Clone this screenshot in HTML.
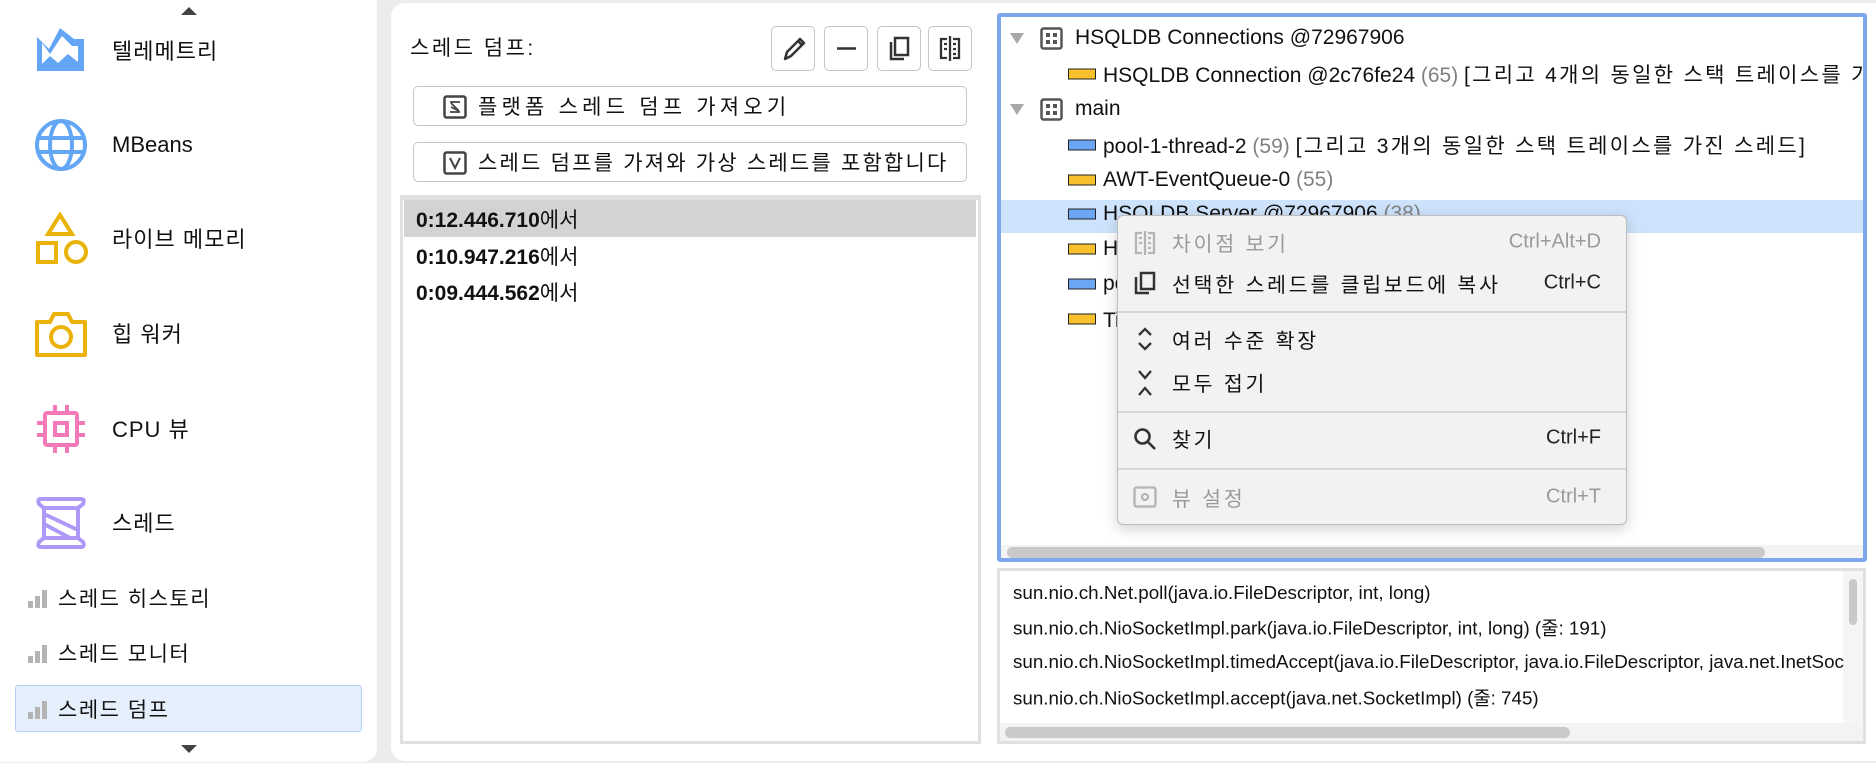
<!DOCTYPE html>
<html><head><meta charset="utf-8"><style>
*{margin:0;padding:0;box-sizing:border-box}
body{width:1876px;height:763px;background:#ececec;position:relative;overflow:hidden;font-family:"Liberation Sans","Noto Sans CJK KR",sans-serif;color:#111}
.a{position:absolute;white-space:nowrap}
.side{left:0;top:0;width:377px;height:762px;background:#fff;border-radius:0 0 14px 0}
.main{left:391px;top:3px;width:1485px;height:758px;background:#fff;border-radius:14px 0 0 14px}
.sl{font-size:22px;left:112px;transform:translateY(-50%);letter-spacing:1px}
.ss{font-size:21px;left:58px;transform:translateY(-50%);letter-spacing:1.5px}
.btn{border:1px solid #c4c4c4;border-radius:5px;background:#fff}
.tb{width:44px;height:45px;top:26px}
.tr{font-size:21px;transform:translateY(-50%)}
.k{letter-spacing:2.3px}
.g{color:#808080}
.bar{width:28px;height:11px;border:1.5px solid #222;transform:translateY(-50%)}
.y{background:#f8c02c}.b{background:#6aa6f4}
.mi{font-size:20.5px;left:1172px;transform:translateY(-50%);letter-spacing:2.8px}
.sc{font-size:20px;right:275px;transform:translateY(-50%);color:#222}
.dis{color:#9a9a9a}
.sep{left:1118px;width:508px;height:2px;background:#d6d6d6}
.st{font-size:18.8px;left:1013px;transform:translateY(-50%)}
</style></head><body>
<div class="a side"></div>
<div class="a main"></div>
<!-- sidebar -->
<div class="a" style="left:181px;top:7px;width:0;height:0;border-left:8px solid transparent;border-right:8px solid transparent;border-bottom:8px solid #444"></div>
<div class="a" style="left:181px;top:745px;width:0;height:0;border-left:8px solid transparent;border-right:8px solid transparent;border-top:8px solid #444"></div>
<svg class="a" style="left:36px;top:26px" width="50" height="47" viewBox="0 0 50 47"><path d="M1 11 L13 23 L24 2 L38 13 L48 13 L48 45 L1 45Z" fill="#64a6f6"/><path d="M6 17 L14 28 L26 10 L36 20 L42 20 L42 36 L32 28 L22 37 L14 30 L6 38Z" fill="#fff"/></svg>
<div class="a sl" style="top:50px">텔레메트리</div>
<svg class="a" style="left:34px;top:118px" width="54" height="54" viewBox="0 0 54 54" fill="none" stroke="#64a6f6" stroke-width="4"><circle cx="27" cy="27" r="24"/><ellipse cx="27" cy="27" rx="11" ry="24"/><path d="M3 20H51M3 34H51"/></svg>
<div class="a sl" style="top:145px;letter-spacing:0">MBeans</div>
<svg class="a" style="left:36px;top:212px" width="52" height="54" viewBox="0 0 52 54" fill="none" stroke="#ebb30a" stroke-width="4"><path d="M24 3 L36 22 L12 22Z"/><rect x="2" y="31" width="18" height="19"/><circle cx="40" cy="40" r="10"/></svg>
<div class="a sl" style="top:238px">라이브 메모리</div>
<svg class="a" style="left:34px;top:310px" width="54" height="48" viewBox="0 0 54 48" fill="none" stroke="#ebb30a" stroke-width="4"><path d="M3 12 H16 L20 4 H34 L38 12 H51 V45 H3Z" stroke-linejoin="round"/><circle cx="27" cy="27" r="10"/></svg>
<div class="a sl" style="top:333px">힙 워커</div>
<svg class="a" style="left:36px;top:404px" width="50" height="50" viewBox="0 0 50 50" fill="none" stroke="#f37ab9" stroke-width="4"><rect x="9" y="9" width="32" height="32" rx="2"/><rect x="19" y="19" width="12" height="12"/><path d="M19 1V9M31 1V9M19 41V49M31 41V49M1 19H9M1 31H9M41 19H49M41 31H49"/></svg>
<div class="a sl" style="top:428px">CPU 뷰</div>
<svg class="a" style="left:36px;top:496px" width="50" height="54" viewBox="0 0 50 54" fill="none" stroke="#ae98f8" stroke-width="4"><path d="M5 3H45Q49 3 47 8L42 12V42L47 46Q49 51 45 51H5Q1 51 3 46L8 42V12L3 8Q1 3 5 3Z"/><path d="M8 12H42M8 42H42M8 18L42 34M8 28L34 42"/></svg>
<div class="a sl" style="top:522px">스레드</div>
<div class="a" style="left:15px;top:685px;width:347px;height:47px;background:#e6f0fd;border:1px solid #b5d1f3;border-radius:3px"></div>
<svg class="a" style="left:28px;top:590px" width="20" height="18"><rect x="0" y="11" width="5" height="7" fill="#b3b3b3"/><rect x="7" y="6" width="5" height="12" fill="#b3b3b3"/><rect x="14" y="0" width="5" height="18" fill="#b3b3b3"/></svg>
<div class="a ss" style="top:598px">스레드 히스토리</div>
<svg class="a" style="left:28px;top:645px" width="20" height="18"><rect x="0" y="11" width="5" height="7" fill="#b3b3b3"/><rect x="7" y="6" width="5" height="12" fill="#b3b3b3"/><rect x="14" y="0" width="5" height="18" fill="#b3b3b3"/></svg>
<div class="a ss" style="top:653px">스레드 모니터</div>
<svg class="a" style="left:28px;top:701px" width="20" height="18"><rect x="0" y="11" width="5" height="7" fill="#b3b3b3"/><rect x="7" y="6" width="5" height="12" fill="#b3b3b3"/><rect x="14" y="0" width="5" height="18" fill="#b3b3b3"/></svg>
<div class="a ss" style="top:709px">스레드 덤프</div>
<!-- middle -->
<div class="a" style="left:410px;top:47px;font-size:21px;letter-spacing:2.5px;transform:translateY(-50%)">스레드 덤프:</div>
<div class="a btn tb" style="left:771px"><svg width="42" height="43" viewBox="0 0 42 43"><path d="M13 32 L15 25 L28 12 L32 16 L19 29 Z M26 14 L30 18" fill="none" stroke="#333" stroke-width="2.5" stroke-linejoin="round"/></svg></div>
<div class="a btn tb" style="left:824px"><svg width="42" height="43"><path d="M12 21.5H31" stroke="#333" stroke-width="2.5"/></svg></div>
<div class="a btn tb" style="left:877px"><svg width="42" height="43" viewBox="0 0 42 43"><rect x="17" y="11" width="13" height="17" fill="none" stroke="#333" stroke-width="2.5"/><path d="M13 15V32H26" fill="none" stroke="#333" stroke-width="2.5"/></svg></div>
<div class="a btn tb" style="left:928px"><svg width="42" height="43" viewBox="0 0 42 43" fill="none" stroke="#333" stroke-width="2.3"><path d="M18 12H12V31H18M24 12H30V31H24M21 9V34M15 17H18M15 22H18M24 17H27M24 22H27M24 27H27"/></svg></div>
<div class="a btn" style="left:413px;top:86px;width:554px;height:40px"></div>
<svg class="a" style="left:443px;top:95px" width="24" height="24" viewBox="0 0 24 24" fill="none" stroke="#444" stroke-width="2.5"><rect x="1.5" y="1.5" width="21" height="21" rx="2"/><path d="M7 7H17M7 17H17M8 8L16 16M8 12L16 16" stroke-width="1.8"/></svg>
<div class="a" style="left:478px;top:106px;font-size:21px;letter-spacing:4.2px;transform:translateY(-50%)">플랫폼 스레드 덤프 가져오기</div>
<div class="a btn" style="left:413px;top:142px;width:554px;height:40px"></div>
<svg class="a" style="left:443px;top:151px" width="24" height="24" viewBox="0 0 24 24" fill="none" stroke="#444" stroke-width="2.5"><rect x="1.5" y="1.5" width="21" height="21" rx="2"/><path d="M7 7L12 17L17 7" stroke-width="2"/></svg>
<div class="a" style="left:478px;top:162px;font-size:21px;letter-spacing:2.2px;transform:translateY(-50%)">스레드 덤프를 가져와 가상 스레드를 포함합니다</div>
<div class="a" style="left:400px;top:195px;width:581px;height:549px;background:#fff;border:3px solid #e0e0e0;border-top-width:5px"></div>
<div class="a" style="left:404px;top:200px;width:572px;height:37px;background:#d3d3d3"></div>
<div class="a" style="left:416px;top:219px;font-size:21px;transform:translateY(-50%)"><b>0:12.446.710</b>에서</div>
<div class="a" style="left:416px;top:256px;font-size:21px;transform:translateY(-50%)"><b>0:10.947.216</b>에서</div>
<div class="a" style="left:416px;top:292px;font-size:21px;transform:translateY(-50%)"><b>0:09.444.562</b>에서</div>
<!-- tree -->
<div class="a" style="left:997px;top:13px;width:870px;height:549px;border:4px solid #7ea7ee;border-radius:3px;background:#fff;overflow:hidden">
 <div class="a" style="left:0;top:183px;width:862px;height:33px;background:#cde2fb"></div>
 <div class="a" style="left:0;top:528px;width:862px;height:17px;background:#f3f3f3"></div>
 <div class="a" style="left:6px;top:530px;width:758px;height:11px;background:#c9c9c9;border-radius:6px"></div>
</div>
<div class="a" style="left:1010px;top:33px;border-left:7px solid transparent;border-right:7px solid transparent;border-top:11px solid #a8a8a8"></div>
<div class="a" style="left:1010px;top:104px;border-left:7px solid transparent;border-right:7px solid transparent;border-top:11px solid #a8a8a8"></div>
<svg class="a" style="left:1040px;top:27px" width="23" height="23" viewBox="0 0 23 23"><rect x="1.5" y="1.5" width="20" height="20" rx="2" fill="none" stroke="#555" stroke-width="2.5"/><rect x="6" y="6" width="4" height="4" fill="#555"/><rect x="13" y="6" width="4" height="4" fill="#555"/><rect x="6" y="13" width="4" height="4" fill="#555"/><rect x="13" y="13" width="4" height="4" fill="#555"/></svg>
<svg class="a" style="left:1040px;top:98px" width="23" height="23" viewBox="0 0 23 23"><rect x="1.5" y="1.5" width="20" height="20" rx="2" fill="none" stroke="#555" stroke-width="2.5"/><rect x="6" y="6" width="4" height="4" fill="#555"/><rect x="13" y="6" width="4" height="4" fill="#555"/><rect x="6" y="13" width="4" height="4" fill="#555"/><rect x="13" y="13" width="4" height="4" fill="#555"/></svg>
<div class="a tr" style="left:1075px;top:38px">HSQLDB Connections @72967906</div>
<div class="a tr" style="left:1075px;top:109px">main</div>
<div style="position:absolute;left:0;top:0;width:1862px;height:560px;overflow:hidden">
<div class="a bar y" style="left:1068px;top:74px"></div><div class="a tr" style="left:1103px;top:74px">HSQLDB Connection @2c76fe24 <span class="g">(65)</span> <span class="k">[그리고 4개의 동일한 스택 트레이스를 가진 스레드]</span></div>
<div class="a bar b" style="left:1068px;top:145px"></div><div class="a tr" style="left:1103px;top:145px">pool-1-thread-2 <span class="g">(59)</span> <span class="k">[그리고 3개의 동일한 스택 트레이스를 가진 스레드]</span></div>
<div class="a bar y" style="left:1068px;top:180px"></div><div class="a tr" style="left:1103px;top:180px">AWT-EventQueue-0 <span class="g">(55)</span></div>
<div class="a bar b" style="left:1068px;top:214px"></div><div class="a tr" style="left:1103px;top:214px">HSQLDB Server @72967906 <span class="g">(38)</span></div>
<div class="a bar y" style="left:1068px;top:249px"></div><div class="a tr" style="left:1103px;top:249px">HSQLDB Timer @1a2b3c</div>
<div class="a bar b" style="left:1068px;top:284px"></div><div class="a tr" style="left:1103px;top:284px">pool-1-thread-1</div>
<div class="a bar y" style="left:1068px;top:319px"></div><div class="a tr" style="left:1103px;top:319px">Timer-0 [그리고 동일한 스택 트레이스 xxxxxxxx 9] <span class="g">(64)</span></div>
</div>
<!-- context menu -->
<div class="a" style="left:1117px;top:215px;width:510px;height:310px;background:#f2f2f2;border:1.5px solid #bdbdbd;border-radius:6px;box-shadow:0 4px 14px rgba(0,0,0,.18)"></div>
<svg class="a" style="left:1134px;top:230px" width="22" height="26" viewBox="0 0 22 26" fill="none" stroke="#b4b4b4" stroke-width="2.3"><path d="M8 3H2V23H8M14 3H20V23H14M11 1V25M5 8H8M5 13H8M14 8H17M14 13H17M14 18H17"/></svg>
<div class="a mi dis" style="top:242px">차이점 보기</div><div class="a sc dis" style="top:242px">Ctrl+Alt+D</div>
<svg class="a" style="left:1134px;top:271px" width="22" height="24" viewBox="0 0 22 24" fill="none" stroke="#333" stroke-width="2.5"><rect x="7" y="2" width="13" height="16"/><path d="M2 6V22H15"/></svg>
<div class="a mi" style="top:283px">선택한 스레드를 클립보드에 복사</div><div class="a sc" style="top:283px">Ctrl+C</div>
<div class="a sep" style="top:311px"></div>
<svg class="a" style="left:1135px;top:326px" width="20" height="26" viewBox="0 0 20 26" fill="none" stroke="#333" stroke-width="2.3"><path d="M4 9L10 3L16 9M4 17L10 23L16 17"/></svg>
<div class="a mi" style="top:339px">여러 수준 확장</div>
<svg class="a" style="left:1135px;top:369px" width="20" height="28" viewBox="0 0 20 28" fill="none" stroke="#333" stroke-width="2.3"><path d="M4 2L10 9L16 2M4 26L10 19L16 26"/></svg>
<div class="a mi" style="top:382px">모두 접기</div>
<div class="a sep" style="top:411px"></div>
<svg class="a" style="left:1133px;top:427px" width="24" height="24" viewBox="0 0 24 24" fill="none" stroke="#333" stroke-width="2.6"><circle cx="9.5" cy="9.5" r="7"/><path d="M14.5 14.5L22 22"/></svg>
<div class="a mi" style="top:438px">찾기</div><div class="a sc" style="top:438px">Ctrl+F</div>
<div class="a sep" style="top:468px"></div>
<svg class="a" style="left:1133px;top:486px" width="24" height="22" viewBox="0 0 24 22" fill="none" stroke="#b4b4b4" stroke-width="2.3"><rect x="1.5" y="1.5" width="21" height="19" rx="2"/><circle cx="12" cy="11" r="3"/></svg>
<div class="a mi dis" style="top:497px">뷰 설정</div><div class="a sc dis" style="top:497px">Ctrl+T</div>
<!-- stack panel -->
<div class="a" style="left:997px;top:568px;width:869px;height:176px;background:#fff;border:3px solid #e0e0e0;overflow:hidden">
 <div class="a" style="right:0;top:0;width:20px;height:170px;background:#f5f5f5"></div>
 <div class="a" style="right:6px;top:8px;width:8px;height:46px;background:#c9c9c9;border-radius:4px"></div>
 <div class="a" style="left:0;bottom:0;width:863px;height:18px;background:#f3f3f3"></div>
 <div class="a" style="left:5px;bottom:3px;width:565px;height:11px;background:#c9c9c9;border-radius:6px"></div>
</div>
<div style="position:absolute;left:1000px;top:571px;width:845px;height:150px;overflow:hidden">
<div class="a st" style="left:13px;top:22px">sun.nio.ch.Net.poll(java.io.FileDescriptor, int, long)</div>
<div class="a st" style="left:13px;top:56px">sun.nio.ch.NioSocketImpl.park(java.io.FileDescriptor, int, long) (줄: 191)</div>
<div class="a st" style="left:13px;top:91px">sun.nio.ch.NioSocketImpl.timedAccept(java.io.FileDescriptor, java.io.FileDescriptor, java.net.InetSocketAddress[])</div>
<div class="a st" style="left:13px;top:126px">sun.nio.ch.NioSocketImpl.accept(java.net.SocketImpl) (줄: 745)</div>
<div class="a st" style="left:13px;top:161px">java.net.ServerSocket.implAccept(java.net.SocketImpl) (줄: 698)</div>
</div>
</body></html>
